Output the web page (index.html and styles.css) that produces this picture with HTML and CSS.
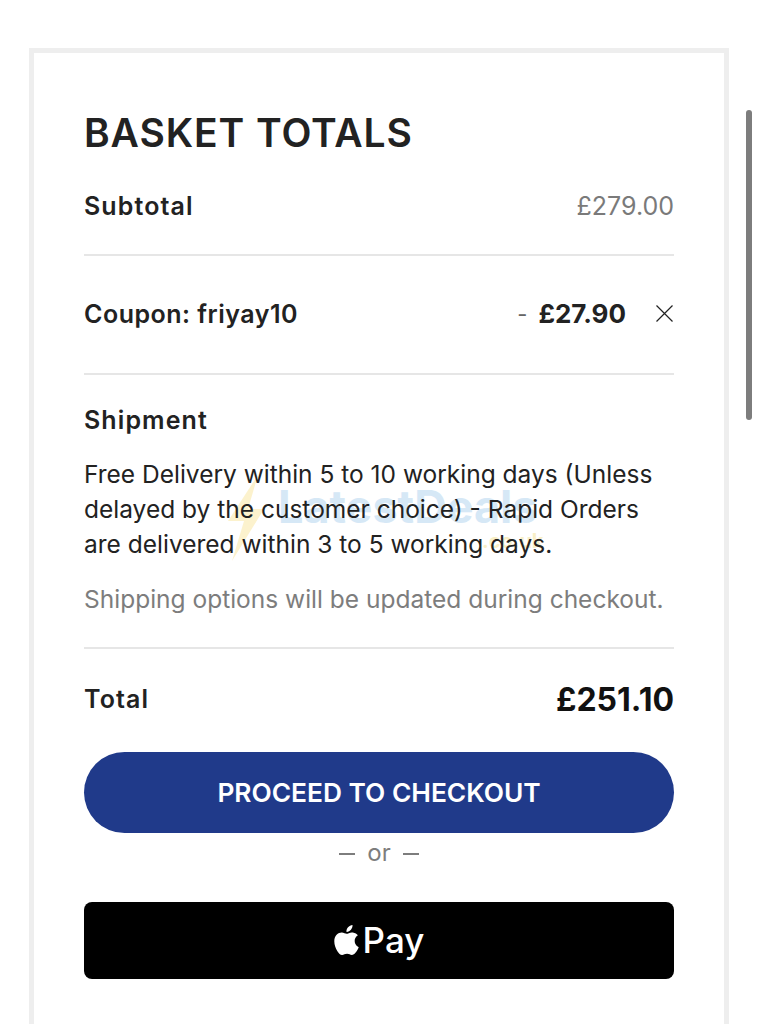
FILE: index.html
```html
<!DOCTYPE html>
<html lang="en">
<head>
  <meta charset="UTF-8">
  <meta name="viewport" content="width=device-width, initial-scale=1.0">
  <title>Basket totals</title>
  <link rel="stylesheet" href="styles.css">
</head>
<body>
  <div class="scroll-thumb"></div>
  <div class="basket-card">
    <h2 class="basket-title">BASKET TOTALS</h2>

    <div class="row row-subtotal">
      <span class="row-label">Subtotal</span>
      <span class="row-price">£279.00</span>
    </div>

    <div class="row row-coupon">
      <span class="row-label coupon-label">Coupon: friyay10</span>
      <span class="coupon-value">
        <span class="coupon-dash">-</span>
        <strong class="coupon-amount">£27.90</strong>
        <svg class="coupon-remove" width="19" height="19" viewBox="0 0 19 19">
          <path d="M1.5 1.5 17.5 17.5M17.5 1.5 1.5 17.5" fill="none" stroke="#222" stroke-width="1.2"/>
        </svg>
      </span>
    </div>

    <div class="shipment">
      <div class="row-label">Shipment</div>
      <p class="shipment-text">Free Delivery within 5 to 10 working days (Unless delayed by the customer choice) - Rapid Orders are delivered within 3 to 5 working days.</p>
      <p class="shipment-note">Shipping options will be updated during checkout.</p>
      <!-- faint logo stamped over the picture -->
      <div class="watermark">
        <svg class="watermark-bolt" width="42" height="86" viewBox="0 0 42 86">
          <path d="M34 0 4 46H20L8 86 40 34H24Z" fill="#fbeebc" opacity="0.75"/>
        </svg>
        <span class="watermark-name">LatestDeals</span>
        <span class="watermark-tld">.co.uk</span>
      </div>
    </div>

    <div class="row row-total">
      <span class="row-label">Total</span>
      <strong class="total-amount">£251.10</strong>
    </div>

    <a class="checkout-btn" href="#">PROCEED TO CHECKOUT</a>
    <div class="or-text">or</div>
    <a class="applepay-btn" href="#">
      <svg class="apple-logo" width="25" height="30" viewBox="0 0 814 1000">
        <path fill="#fff" d="M788 341c-6 4-108 62-108 190 0 148 130 200 134 202-1 3-21 72-69 142-43 62-88 123-156 123s-86-39-164-39c-76 0-103 41-165 41s-106-57-156-127C46 791 0 665 0 545c0-193 125-295 249-295 66 0 121 43 162 43 39 0 100-46 175-46 29 0 132 3 202 94zM555 159c31-37 53-88 53-139 0-7-1-14-2-20-51 2-111 34-147 76-28 32-55 83-55 135 0 8 1 16 2 18 3 1 8 1 13 1 46 0 103-31 136-71z"/>
      </svg>
      <span class="pay-text">Pay</span>
    </a>
  </div>
</body>
</html>
```

FILE: styles.css
```css
html, body {
  height: 100%;
}

body {
  font-family: Inter, "Liberation Sans", Arial, sans-serif;
  margin: 0;
  padding: 48px 29px 0;
  background-color: #fff;
  color: #222;
  height: 1024px;
  box-sizing: border-box;
  overflow: hidden;
  position: relative;
}

.scroll-thumb {
  position: absolute;
  left: 746px;
  top: 110px;
  width: 6px;
  height: 310px;
  border-radius: 3px;
  background-color: #7d7d7d;
}

.basket-card {
  border: 5px solid #eeeeee;
  border-bottom: 0;
  padding: 55px 50px 60px;
  height: 1000px;
  box-sizing: border-box;
}

.basket-title {
  margin: 0;
  font-size: 39px;
  line-height: 50px;
  font-weight: 600;
  color: #222;
  letter-spacing: 0.9px;
}

.row {
  display: flex;
  justify-content: space-between;
  align-items: center;
  border-bottom: 2px solid #e6e6e6;
}

.row-label {
  font-size: 25px;
  font-weight: 600;
  color: #222;
  letter-spacing: 1.1px;
}

.row-subtotal {
  height: 98px;
  box-sizing: border-box;
}

.row-price {
  font-size: 25px;
  color: #7a7a7a;
}

.row-coupon {
  height: 119px;
  padding-bottom: 2px;
  box-sizing: border-box;
}

.coupon-label {
  letter-spacing: 0.5px;
}

.coupon-value {
  display: flex;
  align-items: center;
}

.coupon-dash {
  color: #666;
  font-size: 22px;
  margin-right: 11px;
}

.coupon-amount {
  font-size: 26px;
  font-weight: 700;
}

.coupon-remove {
  margin-left: 29px;
}

.shipment {
  position: relative;
  padding-top: 30px;
  height: 274px;
  box-sizing: border-box;
  border-bottom: 2px solid #e6e6e6;
}

.shipment-text {
  margin: 22px 0 0;
  font-size: 24.5px;
  line-height: 35px;
  color: #222;
}

.shipment-note {
  margin: 20px 0 0;
  font-size: 24.5px;
  line-height: 35px;
  color: #7d7d7d;
}

.watermark {
  position: absolute;
  left: 130px;
  top: 100px;
  width: 340px;
  height: 90px;
  z-index: -1;
}

.watermark-bolt {
  position: absolute;
  left: 10px;
  top: 0;
}

.watermark-name {
  position: absolute;
  left: 64px;
  top: 4px;
  font-size: 45px;
  font-weight: 700;
  color: #d6e8f6;
}

.watermark-tld {
  position: absolute;
  left: 268px;
  top: 54px;
  font-size: 20px;
  font-weight: 700;
  color: #f8efc6;
}

.row-total {
  border-bottom: 0;
  height: 103px;
  padding-bottom: 3px;
  box-sizing: border-box;
}

.total-amount {
  font-size: 32px;
  font-weight: 700;
  color: #111;
}

.checkout-btn {
  display: flex;
  justify-content: center;
  align-items: center;
  height: 81px;
  border-radius: 41px;
  background-color: #203a8a;
  color: #fff;
  font-size: 26.3px;
  font-weight: 600;
  text-decoration: none;
}

.or-text {
  display: flex;
  justify-content: center;
  align-items: center;
  gap: 12px;
  font-size: 24px;
  line-height: 40px;
  color: #7d7d7d;
}

.or-text::before,
.or-text::after {
  content: "";
  width: 16px;
  height: 2px;
  margin-top: 2px;
  background-color: #7d7d7d;
}

.applepay-btn {
  display: flex;
  justify-content: center;
  align-items: center;
  gap: 4px;
  margin-top: 29px;
  padding-bottom: 2px;
  height: 77px;
  box-sizing: border-box;
  border-radius: 8px;
  background-color: #000;
  color: #fff;
  text-decoration: none;
}

.pay-text {
  font-size: 35px;
  font-weight: 500;
}
```
